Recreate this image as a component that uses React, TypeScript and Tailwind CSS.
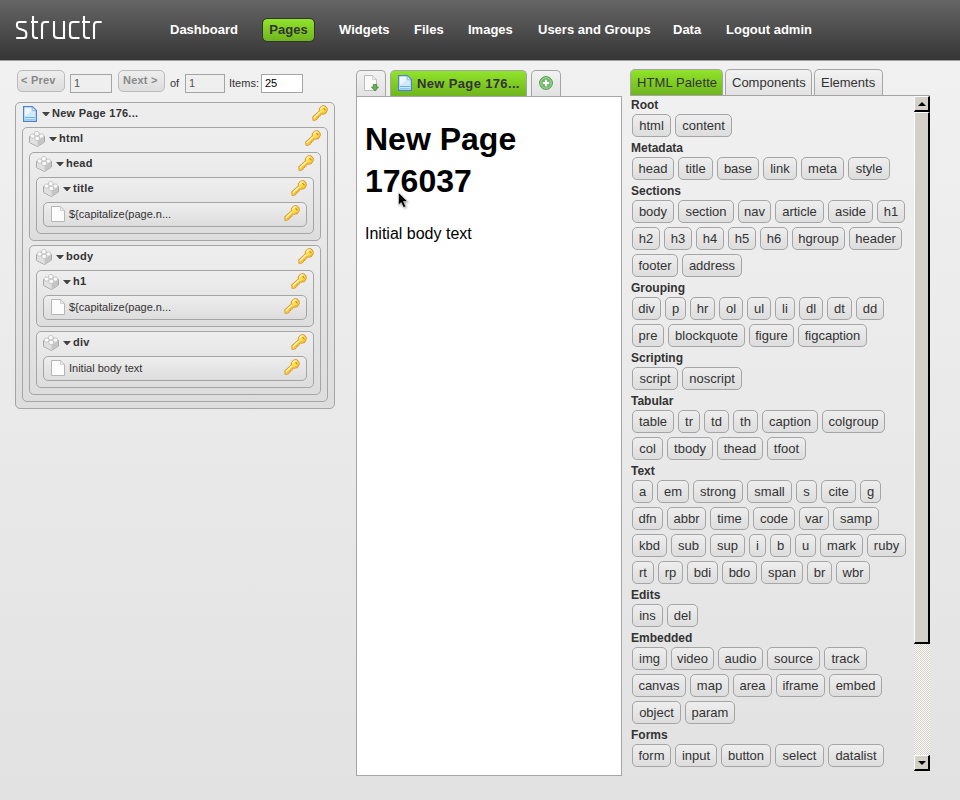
import React from "react";

type TreeNode = { name: string; kind: "page" | "el" | "text"; children?: TreeNode[] };

const tree: TreeNode = {
  name: "New Page 176...", kind: "page",
  children: [{
    name: "html", kind: "el",
    children: [
      { name: "head", kind: "el", children: [{ name: "title", kind: "el", children: [{ name: "${capitalize(page.n...", kind: "text" }] }] },
      {
        name: "body", kind: "el",
        children: [
          { name: "h1", kind: "el", children: [{ name: "${capitalize(page.n...", kind: "text" }] },
          { name: "div", kind: "el", children: [{ name: "Initial body text", kind: "text" }] },
        ],
      },
    ],
  }],
};

const palette: [string, string[]][] = [
  ["Root", ["html content"]],
  ["Metadata", ["head title base link meta style"]],
  ["Sections", ["body section nav article aside h1", "h2 h3 h4 h5 h6 hgroup header", "footer address"]],
  ["Grouping", ["div p hr ol ul li dl dt dd", "pre blockquote figure figcaption"]],
  ["Scripting", ["script noscript"]],
  ["Tabular", ["table tr td th caption colgroup", "col tbody thead tfoot"]],
  ["Text", ["a em strong small s cite g", "dfn abbr time code var samp", "kbd sub sup i b u mark ruby", "rt rp bdi bdo span br wbr"]],
  ["Edits", ["ins del"]],
  ["Embedded", ["img video audio source track", "canvas map area iframe embed", "object param"]],
  ["Forms", ["form input button select datalist"]],
];

// Whole-pixel glyph advances; every letter not listed is 7px wide.
const advances: Record<string, number> = { i: 3, l: 3, j: 3, f: 3, t: 4, r: 4, v: 5, m: 11, w: 9 };
const tagWidth = (tag: string) => [...tag].reduce((sum, ch) => sum + (advances[ch] ?? 7), 14);

const KeyIcon = () => (
  <svg width="16" height="16" viewBox="0 0 17.5 17.5" className="shrink-0">
    <path d="M10 1.8 11.5 .8H14L16.5 3.5 16.7 6 14.5 9.3 11.5 10 10.2 9.6 9 10.8 8.8 12 7.4 12.3 7 13.8 5.8 14 5.4 15.4 3.3 16.8H1.2L.8 13.2 8 6.6 8 4.3Z" fill="#fbe052" stroke="#dc952d" strokeWidth="1.1" />
    <path d="M9.3 4.5 11 2.2 13.5 2M2 14 8.7 7.6" stroke="#fff6b8" strokeWidth="1.4" fill="none" />
    <path d="M3 15.4 9.4 9.2M11 8.6 13.8 8 15.4 5.3" stroke="#f5c02c" strokeWidth="1.2" fill="none" />
    <path d="M12.6 3.6 14.6 5.6" stroke="#c98a2e" strokeWidth="1.3" />
  </svg>
);

const BrickIcon = () => (
  <svg width="16" height="16" viewBox="0 0 16 16" className="shrink-0">
    <path d="M.5 5.5 7.5 2 15.5 5.5V11L8.5 15.5 .5 11.5Z" fill="#e8e8e8" stroke="#a8a8a8" />
    <path d="M1 6.3 8.5 9.8V15L1 11.3Z" fill="#e0e0e0" />
    <path d="M8.5 9.8 15 6V10.8L8.5 15Z" fill="#c4c4c4" />
    <g fill="#fafafa" stroke="#b4b4b4" strokeWidth=".7">
      <path d="M5.6 1.8V3.8A2.2 1.1 0 0 0 10 3.8V1.8A2.2 1.3 0 0 0 5.6 1.8Z" />
      <path d="M1.4 4.3V6A2.2 1.1 0 0 0 5.8 6V4.3A2.2 1.3 0 0 0 1.4 4.3Z" />
      <path d="M10.2 4.3V6A2.2 1.1 0 0 0 14.6 6V4.3A2.2 1.3 0 0 0 10.2 4.3Z" />
      <path d="M6 6.6V8.4A2.2 1.1 0 0 0 10.4 8.4V6.6A2.2 1.3 0 0 0 6 6.6Z" />
    </g>
  </svg>
);

const PageIcon = () => (
  <svg width="14" height="16" viewBox="0 0 14 16" className="shrink-0">
    <path d="M.6.6H9.5L13.4 4.5V15.4H.6Z" fill="#d3e8fb" stroke="#4a84cf" strokeWidth="1.2" />
    <path d="M1.8 1.8H8V5.5L1.8 10Z" fill="#eef7ff" />
    <path d="M9.3 1V4.7H13Z" fill="#fff" stroke="#79a8dc" strokeWidth=".8" />
    <path d="M2 11.5H12" stroke="#5cb4f0" strokeWidth="1" />
    <path d="M2 13.5H12" stroke="#8cc6f2" strokeWidth="1" />
  </svg>
);

const BlankIcon = () => (
  <svg width="14" height="16" viewBox="0 0 14 16" className="shrink-0">
    <path d="M.5.5H9.5L13.5 4.5V15.5H.5Z" fill="#fcfcfc" stroke="#b5b5b5" />
    <path d="M9.5.8V4.5H13.2" fill="#eee" stroke="#c6c6c6" strokeWidth=".8" />
  </svg>
);

const Node = ({ node }: { node: TreeNode }) => {
  if (node.kind === "text")
    return (
      <div className="flex h-[25px] items-start rounded-[5px] border border-[#a5a5a5] bg-gradient-to-b from-[#eeeeee] to-[#dddddd] pl-[7px] pr-[6px]">
        <div className="mt-[3px]"><BlankIcon /></div>
        <span className="ml-1 grow text-[11px] leading-[23px]">{node.name}</span>
        <div className="mt-[2px]"><KeyIcon /></div>
      </div>
    );
  return (
    <div className="rounded-[5px] border border-[#a5a5a5] bg-gradient-to-b from-[#eeeeee] to-[#dddddd] px-[6px] pb-[6px]">
      <div className="flex h-6 items-start">
        <div className={node.kind === "page" ? "mt-[3px] mr-px ml-px" : "mt-[3px]"}>{node.kind === "page" ? <PageIcon /> : <BrickIcon />}</div>
        <svg width="8" height="4" viewBox="0 0 8 4" className="mt-[9px] ml-1 shrink-0">
          <path d="M0 0H8L4.5 4H3.5Z" fill="#444" />
        </svg>
        <span className="ml-[2px] grow text-[11px] leading-[21px] font-bold tracking-[0.25px]">{node.name}</span>
        <div className="mt-[2px]"><KeyIcon /></div>
      </div>
      <div className="flex flex-col gap-1">
        {node.children?.map((c, i) => <Node key={i} node={c} />)}
      </div>
    </div>
  );
};

const navItem = "whitespace-nowrap text-[13px] font-bold leading-[21px] text-white";
const pagerBtn = "flex h-[22px] items-start rounded-[5px] border border-[#bbbbbb] bg-gradient-to-b from-[#eeeeee] to-[#dddddd] text-[11px] leading-[18px] font-bold tracking-[0.2px] text-[#888888]";
const bevel = "flex h-4 w-4 shrink-0 items-center justify-center border-t border-l border-r-2 border-b-2 border-t-white border-l-white border-r-black border-b-black bg-[#d4d0c8]";

export default function App() {
  return (
    <div className="flex h-[800px] w-[960px] flex-col overflow-hidden bg-gradient-to-b from-[#f2f2f2] to-[#e2e2e2] font-['Liberation_Sans',Arial,sans-serif] text-[#333333]">
      <header className="flex h-[61px] shrink-0 items-start border-b border-[#a0a0a0] bg-gradient-to-b from-[#666666] to-[#363636]">
        <svg width="88" height="26" viewBox="0 0 88 26" className="mt-[15px] ml-[15px] shrink-0" fill="none" stroke="#fff" strokeWidth="2.1">
          <path d="M11.5 7H4.5Q2 7 2 9.4V11Q2 13 4.2 13.8L8.8 15.3Q11.3 16.2 11.3 18.5V20.5Q11.3 23 8.8 23H1.2" />
          <path d="M18 1V20Q18 23 20.8 23H23M16 7H23" />
          <path d="M27 24V10.2Q27 7 30.2 7H34" />
          <path d="M39 6V19.8Q39 23 42.4 23H49V6" />
          <path d="M64.5 7H58Q55 7 55 10.2V19.8Q55 23 58 23H64.5" />
          <path d="M69 1V20Q69 23 72 23H75M67 7H75" />
          <path d="M79 24V10.2Q79 7 82.2 7H86.7" />
        </svg>
        <nav className="mt-[19px] ml-[67px] flex">
          <span className={navItem + " w-[93px]"}>Dashboard</span>
          <span className="flex h-[22px] w-[51px] items-center justify-center rounded-[4px] bg-gradient-to-b from-[#91e42a] to-[#6fb51f] text-[13px] font-bold text-[#333333] outline outline-[#333333]">Pages</span>
          <span className={navItem + " ml-[25px] w-[75px]"}>Widgets</span>
          <span className={navItem + " w-[54px]"}>Files</span>
          <span className={navItem + " w-[70px]"}>Images</span>
          <span className={navItem + " w-[135px]"}>Users and Groups</span>
          <span className={navItem + " w-[53px]"}>Data</span>
          <span className={navItem}>Logout admin</span>
        </nav>
      </header>

      <main className="flex grow items-start">
        <section className="mt-[9px] ml-[15px] w-[320px] shrink-0">
          <div className="flex h-8 items-start pl-[2px] text-[11px]">
            <button className={pagerBtn + " w-12 pl-[3px]"}>&lt; Prev</button>
            <div className="mt-1 ml-[5px] h-[19px] w-[42px] border border-[#a5a5a5] bg-[#efefef] pl-[3px] leading-[17px] text-[#555555]">1</div>
            <button className={pagerBtn + " ml-[6px] w-[47px] pl-1"}>Next &gt;</button>
            <span className="mt-1 ml-[5px] w-[15px] leading-[19px]">of</span>
            <div className="mt-1 h-[19px] w-10 border border-[#a5a5a5] bg-[#efefef] pl-[3px] leading-[17px] text-[#555555]">1</div>
            <span className="mt-1 ml-1 w-8 leading-[19px]">Items:</span>
            <div className="mt-1 h-[19px] w-[42px] border border-[#a5a5a5] bg-white pl-[3px] leading-[17px] text-black">25</div>
          </div>
          <Node node={tree} />
        </section>

        <section className="mt-[9px] ml-[21px] w-[266px] shrink-0">
          <div className="flex h-[26px] gap-1">
            <div className="flex w-[30px] justify-center rounded-t-[5px] border border-b-0 border-[#a5a5a5] bg-gradient-to-b from-[#f2f2f2] to-[#e2e2e2] pt-1">
              <svg width="16" height="17" viewBox="0 0 16 17">
                <path d="M1.5.5H9.5L13.5 4.5V15.5H1.5Z" fill="#fafafa" stroke="#bcbcbc" />
                <path d="M9.5.8V4.5H13.2" fill="#eee" stroke="#ccc" strokeWidth=".8" />
                <path d="M10.3 9.5H13.7V12H15.5L12 16 8.5 12H10.3Z" fill="#67ad5c" stroke="#3f8a38" strokeWidth=".8" />
              </svg>
            </div>
            <div className="flex w-[137px] rounded-t-[5px] border border-b-0 border-[#a5a5a5] bg-gradient-to-b from-[#91e42a] to-[#6fb51f] pt-1 pl-[7px]">
              <PageIcon />
              <span className="ml-[5px] whitespace-nowrap text-[13px] leading-[18px] font-bold tracking-[0.35px]">New Page 176...</span>
            </div>
            <div className="flex w-[30px] justify-center rounded-t-[5px] border border-b-0 border-[#a5a5a5] bg-gradient-to-b from-[#f2f2f2] to-[#e2e2e2] pt-[5px]">
              <svg width="14" height="14" viewBox="0 0 14 14">
                <circle cx="7" cy="7" r="6.4" fill="#6db765" stroke="#4c9a48" />
                <circle cx="7" cy="7" r="5.3" fill="none" stroke="#a7d69f" />
                <path d="M7 3.8V10.2M3.8 7H10.2" stroke="#fff" strokeWidth="2.2" />
              </svg>
            </div>
          </div>
          <div className="h-[680px] border border-[#a5a5a5] bg-white pl-2 text-black">
            <h1 className="mt-[21px] w-[200px] text-[32px] leading-[42px] font-bold">New Page 176037</h1>
            <div className="relative mt-[22px] text-[16px] leading-[20px]">
              Initial body text
              <svg width="12" height="18" viewBox="0 0 12 18" className="absolute -top-[32px] left-[33px] drop-shadow-[1px_1px_1px_rgba(0,0,0,0.35)]">
                <path d="M.5.5V13L3.2 10.5 5.5 15.5 7.8 14.5 5.5 9.5H9.5Z" fill="#000" stroke="#fff" strokeWidth=".5" />
              </svg>
            </div>
          </div>
        </section>

        <section className="mt-[8px] ml-2 w-[300px] shrink-0">
          <div className="flex h-[26px] gap-[2px] text-[13px] leading-[25px] whitespace-nowrap">
            <div className="w-[93px] rounded-t-[5px] border border-b-0 border-[#a5a5a5] bg-gradient-to-b from-[#91e42a] to-[#6fb51f] pl-[6px] tracking-[0.1px]">HTML Palette</div>
            <div className="w-[87px] rounded-t-[5px] border border-b-0 border-[#a5a5a5] bg-gradient-to-b from-[#f2f2f2] to-[#e2e2e2] pl-[6px]">Components</div>
            <div className="w-[69px] rounded-t-[5px] border border-b-0 border-[#a5a5a5] bg-gradient-to-b from-[#f2f2f2] to-[#e2e2e2] pl-[6px]">Elements</div>
          </div>
          <div className="flex h-[676px] overflow-hidden border-t border-[#a5a5a5]">
            <div className="w-[284px] shrink-0 pl-[1px]">
              {palette.map(([title, rows]) => (
                <div key={title}>
                  <h2 className="h-4 text-[12px] leading-[18px] font-bold">{title}</h2>
                  {rows.map((row) => (
                    <div key={row} className="flex gap-1 pt-[2px] pb-[2px] pl-[1px]">
                      {row.split(" ").map((t) => (
                        <span key={t} style={{ width: tagWidth(t) }} className="flex h-[23px] shrink-0 justify-center rounded-[5px] border border-[#a5a5a5] bg-gradient-to-b from-[#eeeeee] to-[#dddddd] text-[13px] leading-[22px]">{t}</span>
                      ))}
                    </div>
                  ))}
                </div>
              ))}
            </div>
            <div className="flex w-4 shrink-0 flex-col bg-[repeating-conic-gradient(#ffffff_0_25%,#d4d0c8_0_50%)] bg-[length:2px_2px]">
              <div className={bevel}><svg width="8" height="4" viewBox="0 0 8 4"><path d="M0 4 4 0 8 4Z" /></svg></div>
              <div className="h-[532px] border-t border-l border-r-2 border-b-2 border-t-white border-l-white border-r-black border-b-black bg-[#d4d0c8]" />
              <div className="grow" />
              <div className={bevel}><svg width="8" height="4" viewBox="0 0 8 4"><path d="M0 0H8L4 4Z" /></svg></div>
            </div>
          </div>
        </section>
      </main>
    </div>
  );
}
